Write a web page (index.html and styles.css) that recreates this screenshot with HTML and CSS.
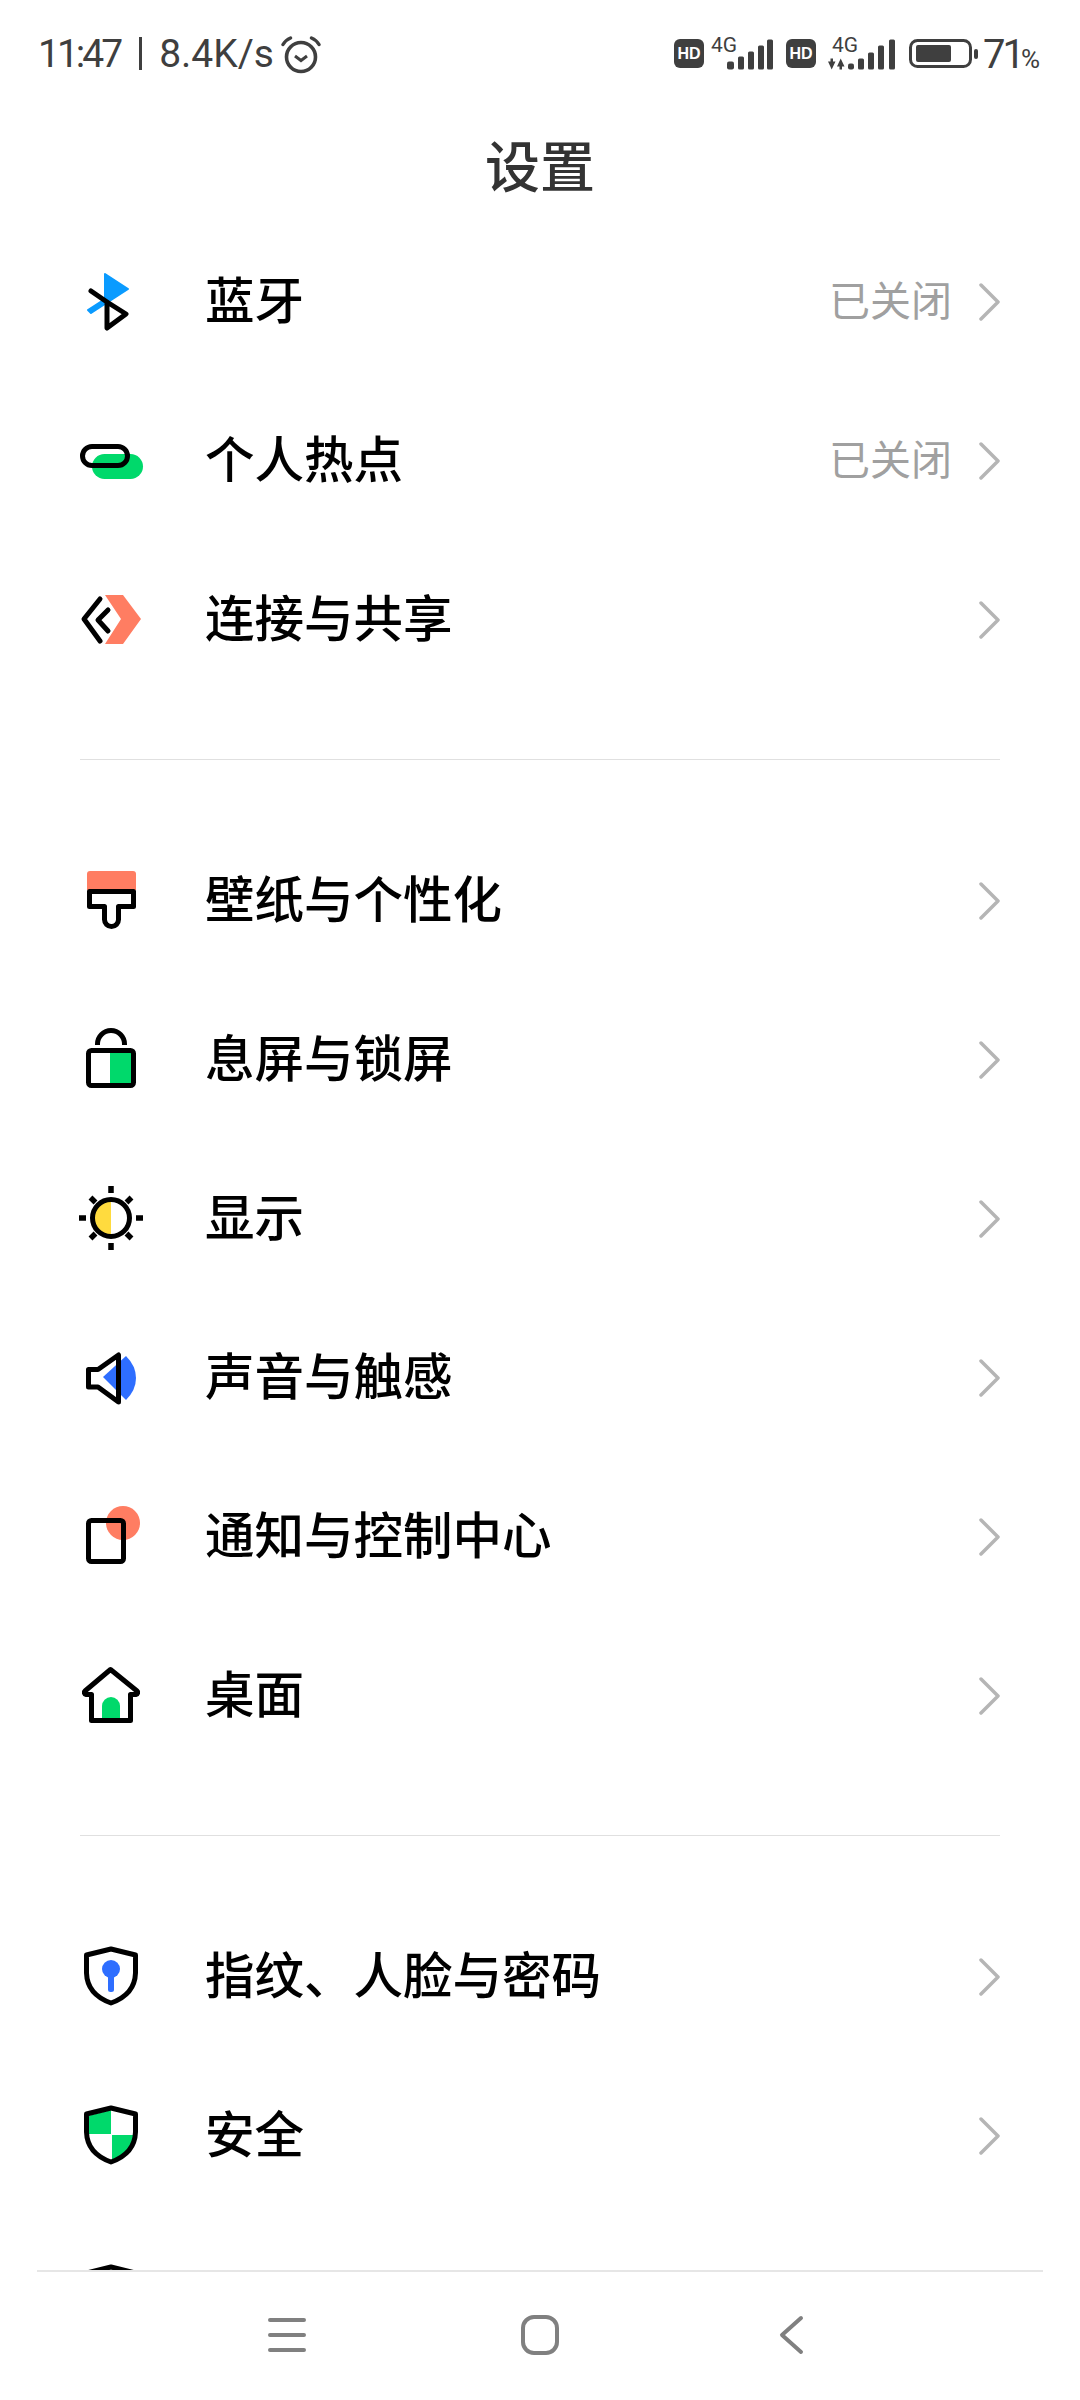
FILE: index.html
```html
<!DOCTYPE html>
<html lang="zh-CN">
<head>
    <meta charset="UTF-8">
    <meta name="viewport" content="width=device-width, initial-scale=1.0">
    <title>设置</title>
    <link rel="stylesheet" href="styles.css">
</head>
<body>
    <div class="phone">
        <header class="status-bar">
            <div class="status-left">
                <span class="clock">11:47</span>
                <span class="sep"></span>
                <span class="speed">8.4K/s</span>
                <svg class="alarm" viewBox="0 0 40 38">
                    <circle cx="20" cy="21" r="14.5" fill="none" stroke="#3f3f3f" stroke-width="3.6"/>
                    <path d="M14 20l6 4.5 6-4.5" fill="none" stroke="#3f3f3f" stroke-width="3"/>
                    <path d="M2 8.500C4 5 6.500 3.200 9.500 2M38 8.500C36 5 33.500 3.200 30.500 2" fill="none" stroke="#3f3f3f" stroke-width="3.400" stroke-linecap="round"/>
                </svg>
            </div>
            <div class="status-right">
                <span class="hd">HD</span>
                <svg class="signal" width="62" height="46" viewBox="0 -4.500 62 46">
                    <text class="net" x="0" y="16">4G</text>
                    <rect x="16" y="26" width="7" height="8" rx="2"/>
                    <rect x="27" y="21" width="6" height="13" rx="1.500"/>
                    <rect x="37" y="16" width="6" height="18" rx="1.500"/>
                    <rect x="47" y="10" width="6" height="24" rx="1.500"/>
                    <rect x="56" y="4" width="6" height="30" rx="1.500"/>
                </svg>
                <span class="hd hd-two">HD</span>
                <svg class="signal" width="67" height="46" viewBox="0 -4.500 67 46">
                    <text class="net" x="4" y="16">4G</text>
                    <path d="M0 26h2.500v-3h2.500v3h2.500L3.700 34zM9 31L12.700 23 16.500 31H14V34H11.500V31z"/>
                    <rect x="20" y="28" width="6" height="6" rx="2"/>
                    <rect x="30" y="23" width="6" height="11" rx="1.500"/>
                    <rect x="40" y="17" width="6" height="17" rx="1.500"/>
                    <rect x="50" y="10" width="6" height="24" rx="1.500"/>
                    <rect x="61" y="4" width="6" height="30" rx="1.500"/>
                </svg>
                <svg class="battery" width="69" height="29" viewBox="0 0 69 29">
                    <rect x="1.500" y="1.500" width="60" height="26" rx="7" fill="none" stroke="#3f3f3f" stroke-width="3"/>
                    <rect x="7" y="6" width="35" height="17" rx="2" fill="#3f3f3f"/>
                    <rect x="65" y="10" width="4" height="10" rx="2" fill="#3f3f3f"/>
                </svg>
                <span class="level">71<small>%</small></span>
            </div>
        </header>

        <h1 class="page-title">设置</h1>

        <main class="list">
            <section class="group">
                <div class="row">
                    <svg class="icon" viewBox="0 0 72 72">
                        <path d="M30 8L53 23 16 47 13 44 30 33z" fill="#0a9bff" stroke="#0a9bff" stroke-width="2" stroke-linejoin="round"/>
                        <path d="M16 25L32 36 51 48 32 62V36" fill="none" stroke="#000" stroke-width="5" stroke-linecap="round" stroke-linejoin="round"/>
                    </svg>
                    <span class="label">蓝牙</span>
                    <span class="value">已关闭</span>
                    <svg class="chevron" viewBox="0 0 24 40"><path d="M5 3l17 17L5 37"/></svg>
                </div>
                <div class="row">
                    <svg class="icon" viewBox="0 0 72 72">
                        <rect x="17" y="29" width="51" height="25" rx="12.500" fill="#00d96b"/>
                        <rect x="7.500" y="21.500" width="45" height="19" rx="9.500" fill="none" stroke="#000" stroke-width="5"/>
                    </svg>
                    <span class="label">个人热点</span>
                    <span class="value">已关闭</span>
                    <svg class="chevron" viewBox="0 0 24 40"><path d="M5 3l17 17L5 37"/></svg>
                </div>
                <div class="row">
                    <svg class="icon" viewBox="0 0 72 72">
                        <path d="M30 11H48L66 35 48 60H30L46 35z" fill="#ff7d62"/>
                        <path d="M25 15L9 35 25 57M33 26L23 36 33 47" fill="none" stroke="#000" stroke-width="5" stroke-linecap="round" stroke-linejoin="round"/>
                    </svg>
                    <span class="label">连接与共享</span>
                    <svg class="chevron" viewBox="0 0 24 40"><path d="M5 3l17 17L5 37"/></svg>
                </div>
            </section>

            <section class="group">
                <div class="row">
                    <svg class="icon" viewBox="0 0 72 72">
                        <path d="M12 9a3 3 0 0 1 3-3h43a3 3 0 0 1 3 3v16H12z" fill="#ff7d62"/>
                        <path d="M14.500 26.500V41.500H29.500V54.500a7 7 0 0 0 14 0V41.500H58.500V26.500z" fill="none" stroke="#000" stroke-width="5" stroke-linejoin="round"/>
                    </svg>
                    <span class="label">壁纸与个性化</span>
                    <svg class="chevron" viewBox="0 0 24 40"><path d="M5 3l17 17L5 37"/></svg>
                </div>
                <div class="row">
                    <svg class="icon" viewBox="0 0 72 72">
                        <rect x="35" y="28" width="22" height="32" fill="#00d96b"/>
                        <rect x="13.500" y="26.500" width="45" height="35" rx="3" fill="none" stroke="#000" stroke-width="5"/>
                        <path d="M22.500 21V20a13.500 13.500 0 0 1 27 0V21" fill="none" stroke="#000" stroke-width="5"/>
                    </svg>
                    <span class="label">息屏与锁屏</span>
                    <svg class="chevron" viewBox="0 0 24 40"><path d="M5 3l17 17L5 37"/></svg>
                </div>
                <div class="row">
                    <svg class="icon" viewBox="0 0 72 72">
                        <path d="M36 18.500a16.500 16.500 0 0 0 0 33z" fill="#ffdb3e"/>
                        <circle cx="36" cy="35" r="18.500" fill="none" stroke="#000" stroke-width="5"/>
                        <path d="M36 3v7M36 60v7M4 35h7M61 35h7M15.500 14.500l5 5M56.500 14.500l-5 5M15.500 55.500l5-5M56.500 55.500l-5-5" fill="none" stroke="#000" stroke-width="5.500"/>
                    </svg>
                    <span class="label">显示</span>
                    <svg class="chevron" viewBox="0 0 24 40"><path d="M5 3l17 17L5 37"/></svg>
                </div>
                <div class="row">
                    <svg class="icon" viewBox="0 0 72 72">
                        <path d="M28 35L51 14Q61 24 61 36 61 48 51 58z" fill="#2e6eff"/>
                        <path d="M13.500 27.500H23L43.500 13V60L23 45H13.500z" fill="none" stroke="#000" stroke-width="5" stroke-linejoin="round"/>
                    </svg>
                    <span class="label">声音与触感</span>
                    <svg class="chevron" viewBox="0 0 24 40"><path d="M5 3l17 17L5 37"/></svg>
                </div>
                <div class="row">
                    <svg class="icon" viewBox="0 0 72 72">
                        <circle cx="48" cy="22" r="17" fill="#ff7d62"/>
                        <rect x="13.500" y="19.500" width="35" height="41" rx="3" fill="none" stroke="#000" stroke-width="5"/>
                    </svg>
                    <span class="label">通知与控制中心</span>
                    <svg class="chevron" viewBox="0 0 24 40"><path d="M5 3l17 17L5 37"/></svg>
                </div>
                <div class="row">
                    <svg class="icon" viewBox="0 0 72 72">
                        <path d="M27 58V46a9 9 0 0 1 18 0V58z" fill="#00d96b"/>
                        <path d="M35.500 9.500L10 31a2 2 0 0 0 1 3.500H16.500V60.500H55.500V34.500H61a2 2 0 0 0 1-3.500z" fill="none" stroke="#000" stroke-width="5" stroke-linejoin="round"/>
                    </svg>
                    <span class="label">桌面</span>
                    <svg class="chevron" viewBox="0 0 24 40"><path d="M5 3l17 17L5 37"/></svg>
                </div>
            </section>

            <section class="group">
                <div class="row">
                    <svg class="icon" viewBox="0 0 72 72">
                        <circle cx="36" cy="28" r="9" fill="#2e6eff"/>
                        <rect x="33" y="30" width="6" height="21" rx="2.500" fill="#2e6eff"/>
                        <path d="M36 8L60.500 14V32C60 48 50 57 36 62 22 57 12 48 11.500 32V14z" fill="none" stroke="#000" stroke-width="5" stroke-linejoin="round"/>
                    </svg>
                    <span class="label">指纹、人脸与密码</span>
                    <svg class="chevron" viewBox="0 0 24 40"><path d="M5 3l17 17L5 37"/></svg>
                </div>
                <div class="row">
                    <svg class="icon" viewBox="0 0 72 72">
                        <path d="M36 10L13 16V34H36zM37 35H59C58 47 49 55 37 60z" fill="#00d96b"/>
                        <path d="M36 8L60.500 14V32C60 48 50 57 36 62 22 57 12 48 11.500 32V14z" fill="none" stroke="#000" stroke-width="5" stroke-linejoin="round"/>
                    </svg>
                    <span class="label">安全</span>
                    <svg class="chevron" viewBox="0 0 24 40"><path d="M5 3l17 17L5 37"/></svg>
                </div>
                <div class="row">
                    <svg class="icon" viewBox="0 0 72 72">
                        <path d="M36 8L60.500 14V32C60 48 50 57 36 62 22 57 12 48 11.500 32V14z" fill="none" stroke="#000" stroke-width="5" stroke-linejoin="round"/>
                    </svg>
                </div>
            </section>
        </main>

        <nav class="nav-bar">
            <svg class="nav-icon" viewBox="0 0 40 40"><path d="M3 5h34M3 20h34M3 35h34"/></svg>
            <svg class="nav-icon" viewBox="0 0 40 40"><rect x="3" y="2" width="34" height="36" rx="11"/></svg>
            <svg class="nav-icon" viewBox="0 0 40 40"><path d="M29 3L10 20 29 37"/></svg>
        </nav>
    </div>
</body>
</html>
```

FILE: styles.css
```css
* {
    box-sizing: border-box;
}

body {
    margin: 0;
    background-color: #fff;
    font-family: "Noto Sans CJK SC", "Noto Sans", sans-serif;
}

.phone {
    width: 1080px;
    height: 2400px;
    display: flex;
    flex-direction: column;
    overflow: hidden;
}

/* status bar */
.status-bar {
    height: 110px;
    flex: none;
    display: flex;
    justify-content: space-between;
    align-items: center;
    padding: 0 40px 3px 38px;
    color: #3f3f3f;
    font-family: Roboto, "Liberation Sans", sans-serif;
}

.status-left, .status-right {
    display: flex;
    align-items: center;
}

.clock, .speed {
    font-size: 39px;
}

.clock {
    letter-spacing: -3px;
}

.sep {
    width: 3px;
    height: 33px;
    margin: 0 17px 0 19px;
    background-color: #3f3f3f;
}

.alarm {
    width: 40px;
    height: 38px;
    margin-left: 7px;
    margin-top: 3px;
}

.hd {
    width: 30px;
    height: 29px;
    border-radius: 6px;
    background-color: #3f3f3f;
    color: #fff;
    font-family: "Liberation Sans", sans-serif;
    font-size: 16px;
    font-weight: bold;
    line-height: 29px;
    text-align: center;
    margin-right: 7px;
}

.hd-two {
    margin-left: 13px;
    margin-right: 12px;
}

.signal {
    fill: #3f3f3f;
}

.net {
    font-family: Roboto, sans-serif;
    font-size: 21px;
    fill: #3f3f3f;
}

.battery {
    margin-left: 14px;
}

.level {
    margin-left: 5px;
    padding-top: 7px;
    font-size: 40px;
    line-height: 44px;
    letter-spacing: -3px;
}

.level small {
    font-size: 26px;
    margin-left: -1px;
    letter-spacing: 0;
}

/* title */
.page-title {
    height: 110px;
    flex: none;
    margin: 0 0 2px;
    color: #333;
    font-size: 55px;
    font-weight: 500;
    line-height: 106px;
    text-align: center;
}

/* list */
.list {
    flex: 1;
    min-height: 0;
    overflow: hidden;
}

.group {
    margin: 0 80px;
    padding-bottom: 60px;
    margin-bottom: 61px;
    border-bottom: 1px solid #e0e0e0;
}

.group:last-child {
    border-bottom: none;
}

.row {
    height: 159px;
    display: flex;
    align-items: center;
}

.icon {
    width: 72px;
    height: 72px;
    flex: none;
    margin-left: -5px;
}

.label {
    flex: 1;
    margin-left: 58px;
    padding-bottom: 8px;
    color: #000;
    font-size: 49.5px;
    font-weight: 500;
}

.value {
    color: #a0a0a0;
    font-size: 41px;
    font-weight: 400;
    padding-bottom: 8px;
    margin-right: 24px;
}

.chevron {
    width: 24px;
    height: 40px;
    flex: none;
    fill: none;
    stroke: #b5b5b5;
    stroke-width: 3.500;
    stroke-linecap: round;
    stroke-linejoin: round;
}

/* bottom navigation */
.nav-bar {
    height: 130px;
    flex: none;
    margin: 0 37px;
    padding: 43px 231px 0 230px;
    border-top: 2px solid #e6e6e6;
    display: flex;
    justify-content: space-between;
}

.nav-icon {
    width: 40px;
    height: 40px;
    fill: none;
    stroke: #808080;
    stroke-width: 4;
    stroke-linecap: round;
    stroke-linejoin: round;
}
```
